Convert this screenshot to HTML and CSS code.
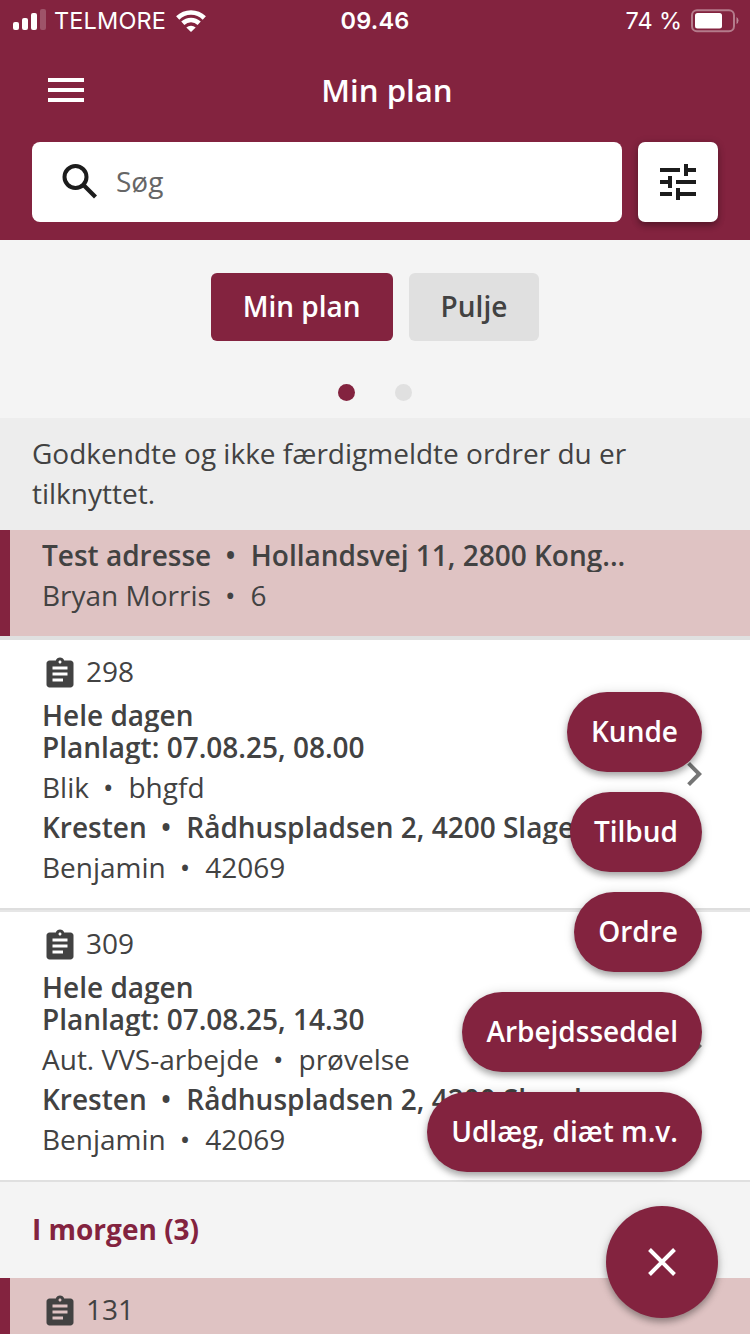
FILE: index.html
```html
<!DOCTYPE html>
<html lang="da">
<head>
<meta charset="utf-8">
<title>Min plan</title>
<link rel="stylesheet" href="styles.css">
</head>
<body>
<svg class="defs" aria-hidden="true">
  <symbol id="clipboard" viewBox="0 0 24 24"><path d="M19 3h-4.180C14.400 1.840 13.300 1 12 1c-1.300 0-2.400.840-2.820 2H5c-1.100 0-2 .9-2 2v14c0 1.100.9 2 2 2h14c1.100 0 2-.9 2-2V5c0-1.100-.9-2-2-2zm-7 0c.55 0 1 .45 1 1s-.45 1-1 1-1-.45-1-1 .45-1 1-1zm2 14H7v-2h7v2zm3-4H7v-2h10v2zm0-4H7V7h10v2z"/></symbol>
  <symbol id="chevron" viewBox="0 0 24 24"><path d="M10 6 8.590 7.410 13.170 12l-4.580 4.590L10 18l6-6z"/></symbol>
</svg>
<div class="app">
  <header class="top">
    <div class="status">
      <div class="status-left">
        <svg class="signal" width="34" height="22" viewBox="0 0 34 22"><rect x="0" y="13" width="6" height="8" rx="2"/><rect x="9" y="9" width="6" height="12" rx="2"/><rect x="18" y="4" width="6" height="17" rx="2"/><rect x="27" y="0" width="6" height="21" rx="2" opacity=".22"/></svg>
        <span class="carrier">TELMORE</span>
        <svg class="wifi" width="30" height="22" viewBox="0 0 30 22"><g fill="none" stroke="#fff" stroke-width="4.600"><path d="M1.700 8a19 19 0 0 1 26.600 0"/><path d="M6.800 13.300a12 12 0 0 1 16.400 0"/></g><path d="M15 22l-4.700-4.500a7 7 0 0 1 9.400 0z"/></svg>
      </div>
      <span class="clock">09.46</span>
      <div class="status-right">
        <span class="percent">74 %</span>
        <svg class="battery" width="48" height="24" viewBox="0 0 48 24"><rect x="1" y="1.200" width="42" height="21" rx="5" fill="none" stroke="#fff" stroke-width="2" opacity=".4"/><rect x="4" y="4" width="27" height="15.500" rx="2.500"/><path d="M45.500 8v7q2-1 2-3.500t-2-3.500z" opacity=".45"/></svg>
      </div>
    </div>
    <div class="titlebar">
      <svg class="menu" width="36" height="24" viewBox="0 0 36 24"><path d="M0 0h36v4H0zM0 10h36v4H0zM0 20h36v4H0z"/></svg>
      <h1 class="title">Min plan</h1>
    </div>
    <div class="search-row">
      <div class="search">
        <svg class="search-icon" width="36" height="36" viewBox="0 0 36 36" fill="none" stroke="#1c1c1c"><circle cx="13.500" cy="13" r="11" stroke-width="4"/><path d="M22 21.500 33.500 33" stroke-width="4.200"/></svg>
        <span class="placeholder">Søg</span>
      </div>
      <div class="filter"><svg width="36" height="36" viewBox="3 3 18 18"><path d="M3 17v2h6v-2H3zM3 5v2h10V5H3zm10 16v-2h8v-2h-8v-2h-2v6h2zM7 9v2H3v2h4v2h2V9H7zm14 4v-2H11v2h10zm-6-4h2V7h4V5h-4V3h-2v6z"/></svg></div>
    </div>
  </header>

  <nav class="tabs">
    <div class="tab active">Min plan</div>
    <div class="tab">Pulje</div>
  </nav>
  <div class="dots"><i class="dot on"></i><i class="dot"></i></div>
  <p class="intro">Godkendte og ikke færdigmeldte ordrer du er tilknyttet.</p>

  <main class="list">
    <article class="order marked partial">
      <div class="strong">Test adresse<b class="sep">•</b>Hollandsvej 11, 2800 Kong...</div>
      <div class="line">Bryan Morris<b class="sep">•</b>6</div>
    </article>
    <article class="order ruled">
      <div class="number"><svg class="clip"><use href="#clipboard"/></svg>298</div>
      <div class="strong tight">Hele dagen</div>
      <div class="strong">Planlagt: 07.08.25, 08.00</div>
      <div class="line">Blik<b class="sep">•</b>bhgfd</div>
      <div class="strong">Kresten<b class="sep">•</b>Rådhuspladsen 2, 4200 Slagelse</div>
      <div class="line">Benjamin<b class="sep">•</b>42069</div>
      <svg class="go"><use href="#chevron"/></svg>
    </article>
    <article class="order last">
      <div class="number"><svg class="clip"><use href="#clipboard"/></svg>309</div>
      <div class="strong tight">Hele dagen</div>
      <div class="strong">Planlagt: 07.08.25, 14.30</div>
      <div class="line">Aut. VVS-arbejde<b class="sep">•</b>prøvelse</div>
      <div class="strong">Kresten<b class="sep">•</b>Rådhuspladsen 2, 4200 Slagelse</div>
      <div class="line">Benjamin<b class="sep">•</b>42069</div>
      <svg class="go"><use href="#chevron"/></svg>
    </article>
    <h2 class="day">I morgen (3)</h2>
    <article class="order marked">
      <div class="number"><svg class="clip"><use href="#clipboard"/></svg>131</div>
    </article>
  </main>

  <div class="actions">
    <div class="pill">Kunde</div>
    <div class="pill">Tilbud</div>
    <div class="pill">Ordre</div>
    <div class="pill">Arbejdsseddel</div>
    <div class="pill">Udlæg, diæt m.v.</div>
    <div class="fab"><svg width="28" height="28" viewBox="0 0 28 28"><path d="M1.500 1.500l25 25M26.500 1.500l-25 25" stroke="#fff" stroke-width="4"/></svg></div>
  </div>
</div>
</body>
</html>
```
FILE: styles.css
```css
* { box-sizing: border-box; margin: 0; padding: 0; }
body { background: #f4f4f4; }
.defs { display: none; }
.app {
  position: relative;
  width: 750px;
  height: 1334px;
  overflow: hidden;
  background: #f4f4f4;
  color: #424242;
  font: 28px/40px "Open Sans", "Noto Sans", sans-serif;
}
.top { height: 240px; background: #83233f; color: #fff; fill: #fff; }

.status {
  display: grid;
  grid-template-columns: 1fr auto 1fr;
  height: 40px;
  padding: 0 11px 0 13px;
  font: 23.5px/40px Inter, sans-serif;
}
.status-left, .status-right { display: flex; align-items: center; }
.status-right { justify-content: flex-end; }
.signal { margin-top: -1px; }
.carrier { margin: 1px 10px 0 7px; letter-spacing: .15px; }
.clock { font-weight: 600; letter-spacing: .2px; padding-top: 1px; margin-left: -2px; }
.percent { margin: 1px 9px 0 0; letter-spacing: -.1px; }

.titlebar { display: grid; grid-template-columns: 48px auto 24px; justify-content: space-between; align-items: center; height: 102px; padding: 0 48px; }
.menu { margin-top: -2px; }
.title { font-size: 31.2px; font-weight: 600; line-height: 48px; margin-top: -2px; }

.search-row { display: flex; gap: 16px; padding: 0 32px; }
.search { flex: 1; display: flex; align-items: center; gap: 18px; height: 80px; padding-left: 30px; border-radius: 8px; background: #fff; }
.search-icon { margin-top: -1px; }
.placeholder { margin-top: -2px; color: #666; }
.filter {
  display: grid;
  place-items: center;
  width: 80px;
  height: 80px;
  border-radius: 7px;
  background: #fff;
  fill: #1c1c1c;
  box-shadow: 0 4px 6px rgba(0, 0, 0, .25), 0 1px 8px rgba(0, 0, 0, .15);
}

.tabs { display: flex; justify-content: center; gap: 16px; padding-top: 33px; }
.tab { height: 68px; padding: 0 32px; border-radius: 6px; background: #e0e0e0; font-weight: 600; line-height: 66px; }
.tab.active { background: #83233f; color: #fff; }
.dots { display: flex; justify-content: center; gap: 40px; height: 77px; padding-top: 43px; }
.dot { width: 17px; height: 17px; border-radius: 50%; background: #e0e0e0; }
.dot.on { background: #83233f; }
.intro { height: 112px; padding: 15px 32px 0; background: #ededed; }

.order {
  position: relative;
  height: 272px;
  padding: 16px 0 0 42px;
  background: #fff;
  border-bottom: 4px solid #e0e0e0;
}
.order.ruled { border-bottom: 2px solid #e6e6e6; box-shadow: inset 0 -2px #dedede; }
.order.last { height: 270px; border-bottom-width: 2px; }
.order.marked { background: #dfc3c3; box-shadow: inset 10px 0 #83233f; }
.order.partial { height: 110px; padding-top: 10px; }
.number { display: flex; align-items: center; gap: 8px; height: 32px; margin-bottom: 12px; line-height: 30px; padding-bottom: 2px; }
.clip { width: 36px; height: 36px; margin-top: 6px; fill: #424242; }
.strong { height: 32px; line-height: 30px; margin-bottom: 4px; overflow: hidden; white-space: nowrap; font-weight: 600; }
.strong.tight { margin-bottom: 0; }
.line { height: 40px; line-height: 38px; margin-bottom: 4px; white-space: nowrap; }
.sep { margin: 0 15px 0 14px; font-weight: inherit; }
.go { position: absolute; right: 32px; top: 110px; width: 48px; height: 48px; fill: #757575; }
.day { height: 96px; padding-left: 32px; color: #83233f; font-size: 28px; font-weight: 700; line-height: 94px; }

.actions {
  position: absolute;
  right: 48px;
  top: 692px;
  display: flex;
  flex-direction: column;
  align-items: flex-end;
  gap: 20px;
}
.pill, .fab {
  background: #83233f;
  color: #fff;
  box-shadow: 0 4px 6px rgba(0, 0, 0, .28), 0 1px 12px rgba(0, 0, 0, .14);
}
.pill { height: 80px; padding: 0 24px; border-radius: 40px; font-weight: 600; line-height: 78px; }
.fab { display: grid; place-items: center; width: 112px; height: 112px; margin: 14px -16px 0 0; border-radius: 50%; }
```
